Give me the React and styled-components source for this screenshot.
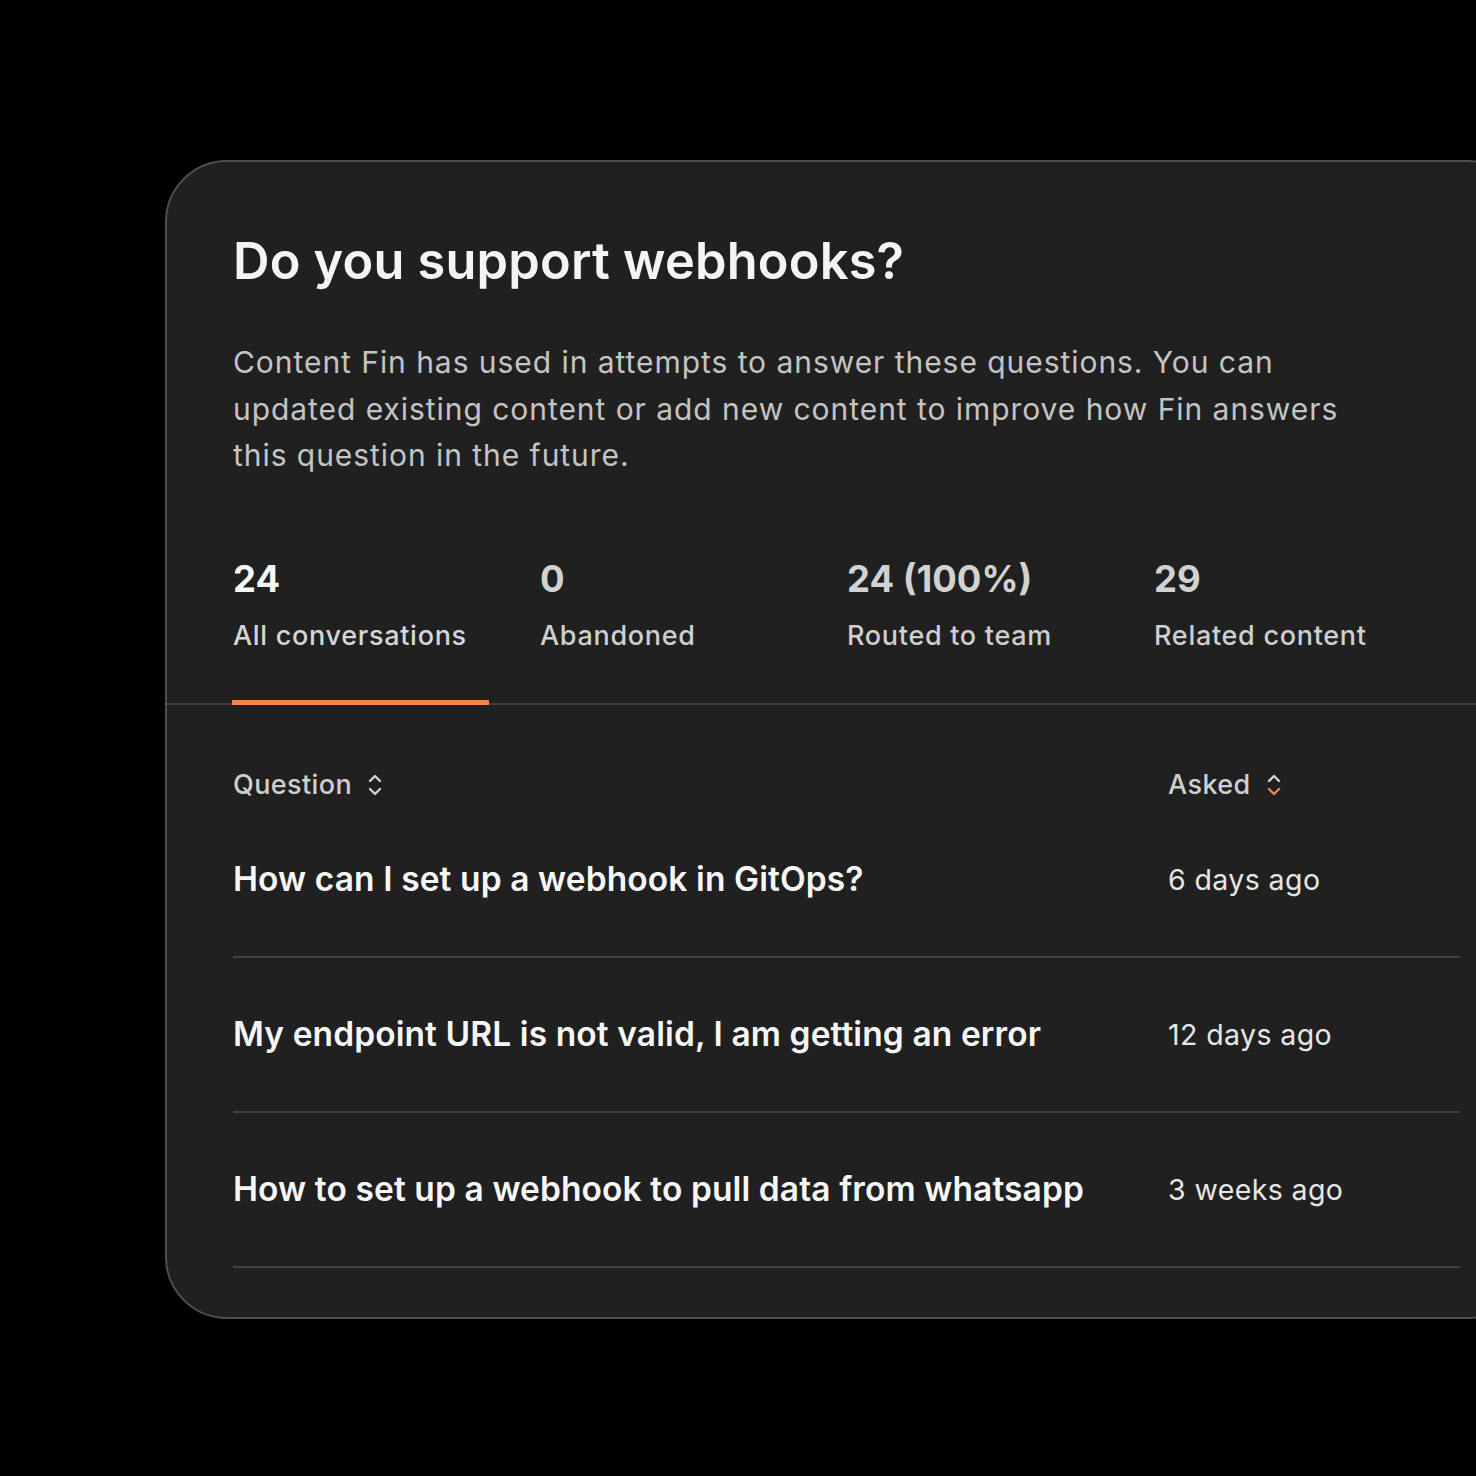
import React from "react";
import styled, { createGlobalStyle } from "styled-components";

const Global = createGlobalStyle`
  html, body { margin: 0; padding: 0; background: #000; }
  body { overflow: hidden; font-family: Inter, "Noto Sans", sans-serif; -webkit-font-smoothing: antialiased; }
`;

const Page = styled.div`
  width: 1476px;
  height: 1476px;
  background: #000;
  padding-top: 160px;
  padding-left: 165px;
  box-sizing: border-box;
  overflow: hidden;
`;

const Card = styled.div`
  width: 1364px;
  height: 1159px;
  box-sizing: border-box;
  background: #202020;
  border: 2px solid #4f4f4f;
  border-radius: 62px;
  display: flex;
  flex-direction: column;
`;

const Head = styled.div`
  padding: 68px 66px 0 66px;
`;

const Title = styled.h1`
  margin: 0;
  font-size: 50.5px;
  line-height: 62px;
  font-weight: 600;
  color: #f4f4f4;
  letter-spacing: 0.2px;
`;

const Lead = styled.p`
  margin: 47px 0 0;
  font-size: 30px;
  line-height: 46.5px;
  font-weight: 400;
  color: #c4c4c4;
  letter-spacing: 0.95px;
  max-width: 1160px;
`;

const Stats = styled.div`
  margin-top: 77px;
  display: flex;
  padding-left: 66px;
  border-bottom: 2px solid #414141;
`;

const Stat = styled.div`
  width: 307px;
  position: relative;
  padding-bottom: 49px;
  &::after {
    content: "";
    display: ${p => (p.$active ? "block" : "none")};
    position: absolute;
    left: -1px;
    bottom: -2px;
    width: 257px;
    height: 5px;
    background: #f0864f;
  }
`;

const Num = styled.div`
  font-size: 36.5px;
  line-height: 46px;
  font-weight: 700;
  color: ${p => (p.$active ? "#f6f6f6" : "#d2d2d2")};
`;

const Label = styled.div`
  margin-top: 16px;
  font-size: 27px;
  line-height: 36px;
  font-weight: 500;
  letter-spacing: 0.7px;
  color: ${p => (p.$active ? "#d6d6d6" : "#cfcfcf")};
`;

const Table = styled.div`
  padding: 0 67px 0 66px;
`;

const HeaderRow = styled.div`
  display: grid;
  grid-template-columns: 935px 1fr;
  height: 98px;
  align-items: end;
`;

const HeadCell = styled.div`
  display: flex;
  align-items: center;
  gap: 15px;
  height: 36px;
  font-size: 27px;
  font-weight: 500;
  letter-spacing: 0.4px;
  color: #cfcfcf;
`;

const Rows = styled.div`
  display: flex;
  flex-direction: column;
`;

const Row = styled.div`
  display: grid;
  grid-template-columns: 935px 1fr;
  align-items: center;
  height: 155px;
  border-bottom: 2px solid #414141;
  box-sizing: border-box;
`;

const Question = styled.div`
  font-size: 33.5px;
  font-weight: 600;
  color: #f6f6f6;
  letter-spacing: 0.1px;
`;

const When = styled.div`
  font-size: 28.5px;
  font-weight: 400;
  color: #e6e6e6;
  letter-spacing: 0.4px;
`;

const SortIcon = ({ down = "#cfcfcf" }) => (
  <svg width="16" height="26" viewBox="0 0 16 26" fill="none">
    <path d="M3 9 L8 4 L13 9" stroke="#d4d4d4" strokeWidth="2.4" strokeLinecap="round" strokeLinejoin="round" />
    <path d="M3 17 L8 22 L13 17" stroke={down} strokeWidth="2.4" strokeLinecap="round" strokeLinejoin="round" />
  </svg>
);

const stats = [
  { n: "24", l: "All conversations", active: true },
  { n: "0", l: "Abandoned" },
  { n: "24 (100%)", l: "Routed to team" },
  { n: "29", l: "Related content" },
];

const rows = [
  { q: "How can I set up a webhook in GitOps?", w: "6 days ago" },
  { q: "My endpoint URL is not valid, I am getting an error", w: "12 days ago" },
  { q: "How to set up a webhook to pull data from whatsapp", w: "3 weeks ago" },
];

export default function App() {
  return (
    <Page>
      <Global />
      <Card>
        <Head>
          <Title>Do you support webhooks?</Title>
          <Lead>
            Content Fin has used in attempts to answer these questions. You can updated existing content or add new content to improve how Fin answers this question in the future.
          </Lead>
        </Head>
        <Stats>
          {stats.map(s => (
            <Stat key={s.l} $active={s.active}>
              <Num $active={s.active}>{s.n}</Num>
              <Label $active={s.active}>{s.l}</Label>
            </Stat>
          ))}
        </Stats>
        <Table>
          <HeaderRow>
            <HeadCell>Question <SortIcon /></HeadCell>
            <HeadCell>Asked <SortIcon down="#f0864f" /></HeadCell>
          </HeaderRow>
          <Rows>
            {rows.map(r => (
              <Row key={r.q}>
                <Question>{r.q}</Question>
                <When>{r.w}</When>
              </Row>
            ))}
          </Rows>
        </Table>
      </Card>
    </Page>
  );
}
